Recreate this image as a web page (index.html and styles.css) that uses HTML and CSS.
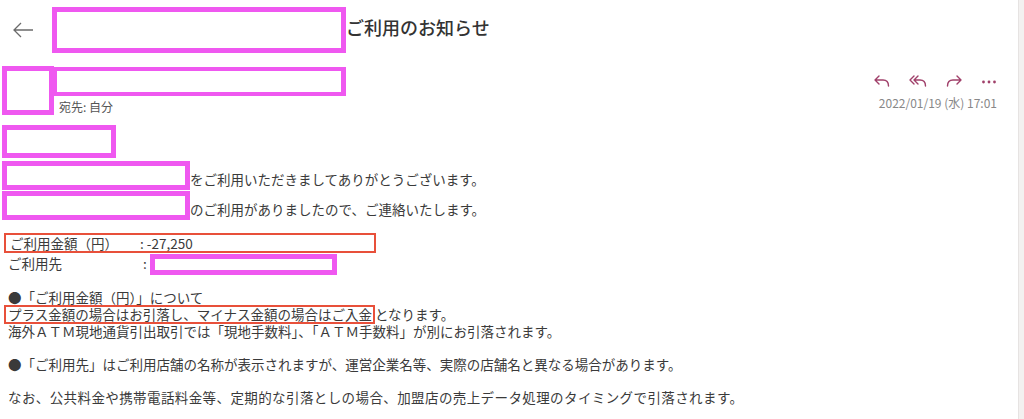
FILE: index.html
```html
<!DOCTYPE html>
<html lang="ja">
<head>
    <meta charset="UTF-8">
    <meta name="viewport" content="width=device-width, initial-scale=1.0">
    <title>ご利用のお知らせ</title>
    <link rel="stylesheet" href="styles.css">
</head>
<body>

<div class="page">
    <div class="mail">

        <!-- 件名 -->
        <div class="topbar">
            <button class="back" aria-label="戻る">
                <svg width="22" height="16" viewBox="0 0 22 16">
                    <path d="M21 8H2 M9 1L2 8L9 15" fill="none" stroke="#6b6b6b" stroke-width="1.3"/>
                </svg>
            </button>
            <div class="redact subject-box"></div>
            <h1 class="title">ご利用のお知らせ</h1>
        </div>

        <!-- 差出人 -->
        <div class="sender">
            <div class="redact avatar"></div>
            <div class="sender-info">
                <div class="redact name-box"></div>
                <div class="to">宛先: 自分</div>
            </div>
            <div class="actions">
                <div class="icons">
                    <svg width="18" height="14" viewBox="0 0 18 14">
                        <path d="M6 2L2 6L6 10 M2 6H10C13.5 6 15.5 8 15.5 12" fill="none" stroke="#a0406a" stroke-width="1.4" stroke-linecap="round" stroke-linejoin="round"/>
                    </svg>
                    <svg width="18" height="14" viewBox="0 0 18 14">
                        <path d="M5 2L1 6L5 10 M9 2L5 6L9 10 M5 6H11C14.5 6 16.5 8 16.5 12" fill="none" stroke="#a0406a" stroke-width="1.4" stroke-linecap="round" stroke-linejoin="round"/>
                    </svg>
                    <svg width="18" height="14" viewBox="0 0 18 14">
                        <path d="M12 2L16 6L12 10 M16 6H8C4.5 6 2.5 8 2.5 12" fill="none" stroke="#a0406a" stroke-width="1.4" stroke-linecap="round" stroke-linejoin="round"/>
                    </svg>
                    <svg width="16" height="14" viewBox="0 0 16 14">
                        <circle cx="2.5" cy="8" r="1.4" fill="#a0406a"/>
                        <circle cx="8" cy="8" r="1.4" fill="#a0406a"/>
                        <circle cx="13.5" cy="8" r="1.4" fill="#a0406a"/>
                    </svg>
                </div>
                <div class="date">2022/01/19 (水) 17:01</div>
            </div>
        </div>

        <!-- 本文 -->
        <div class="body">
            <div class="redact box-short"></div>
            <div class="row">
                <div class="redact box-wide"></div>
                <span class="row-text">をご利用いただきましてありがとうございます。</span>
            </div>
            <div class="row">
                <div class="redact box-wide"></div>
                <span class="row-text">のご利用がありましたので、ご連絡いたします。</span>
            </div>

            <div class="detail mark">
                <span class="label">ご利用金額（円）</span>: -27,250
            </div>
            <div class="detail shop">
                <span class="label label-shop">ご利用先</span>:<span class="redact shop-box"></span>
            </div>

            <p class="line gap">●「ご利用金額（円）」について</p>
            <p class="line"><span class="mark-inline">プラス金額の場合はお引落し、マイナス金額の場合はご入金</span>となります。</p>
            <p class="line">海外ＡＴＭ現地通貨引出取引では「現地手数料」、「ＡＴＭ手数料」が別にお引落されます。</p>
            <p class="line gap">●「ご利用先」はご利用店舗の名称が表示されますが、運営企業名等、実際の店舗名と異なる場合があります。</p>
            <p class="line gap long">なお、公共料金や携帯電話料金等、定期的な引落としの場合、加盟店の売上データ処理のタイミングで引落されます。</p>
        </div>
    </div>

    <div class="side"></div>
</div>

</body>
</html>
```

FILE: styles.css
```css
body {
    margin: 0;
    font-family: "Noto Sans CJK JP", "Noto Sans", sans-serif;
    color: #333;
    background-color: #fff;
    overflow: hidden;
}

.page {
    display: flex;
    height: 419px;
}

.mail {
    flex: 1;
}

/* 塗りつぶし */
.redact {
    box-sizing: border-box;
    border: 5px solid #ef58f0;
    background-color: #fff;
}

/* 件名 */
.topbar {
    display: flex;
    align-items: flex-start;
    padding-top: 7px;
}

.back {
    width: 52px;
    height: 40px;
    padding: 8px 0 0 12px;
    margin: 0;
    border: none;
    background: none;
    text-align: left;
}

.subject-box {
    width: 294px;
    height: 46px;
}

.title {
    margin: 8px 0 0;
    font-size: 18px;
    line-height: 24px;
    font-weight: 500;
    color: #333;
}

/* 差出人 */
.sender {
    display: flex;
    align-items: flex-start;
    margin-top: 13px;
}

.avatar {
    width: 52px;
    height: 49px;
    margin-left: 2px;
}

.name-box {
    width: 294px;
    height: 29px;
    margin: 1px 0 0 -2px;
    border-width: 4px 5px;
}

.to {
    margin: 3px 0 0 5px;
    font-size: 12px;
    line-height: 16px;
    color: #555;
}

.actions {
    margin-left: auto;
    padding-right: 21px;
    text-align: right;
}

.icons {
    display: flex;
    justify-content: flex-end;
    gap: 18px;
    margin-top: 8px;
    height: 14px;
}

.date {
    margin-top: 7px;
    font-size: 12px;
    line-height: 16px;
    color: #888;
}

/* 本文 */
.body {
    padding-left: 2px;
    font-size: 13.5px;
    line-height: 17px;
    color: #3a3a3a;
}

.box-short {
    width: 114px;
    height: 33px;
    margin-top: 10px;
}

.row {
    display: flex;
    align-items: flex-end;
    margin-top: 3px;
}

.row + .row {
    margin-top: 1px;
}

.box-wide {
    width: 188px;
    height: 29px;
}

.row-text {
    padding-bottom: 2px;
}

.detail {
    display: flex;
    align-items: center;
    padding-left: 6px;
}

.mark {
    box-sizing: border-box;
    width: 372px;
    height: 20px;
    margin: 13px 0 0 2px;
    padding-left: 4px;
    border: 2px solid #e8503a;
}

.label {
    display: inline-block;
    width: 130px;
}

.label-shop {
    width: 135px;
}

.shop {
    height: 20px;
}

.shop-box {
    display: inline-block;
    width: 187px;
    height: 21px;
    margin: 3px 0 0 3px;
}

.line {
    height: 17px;
    margin: 0;
    padding-left: 6px;
    white-space: nowrap;
}

.gap {
    margin-top: 16px;
}

.long {
    letter-spacing: 0.4px;
}

.mark-inline {
    display: inline-block;
    box-sizing: border-box;
    height: 19px;
    margin: -1px 0 -1px -4px;
    padding: 0 1px 0 2px;
    line-height: 15px;
    vertical-align: top;
    border: 2px solid #e8503a;
}

/* 右端のバー */
.side {
    width: 5px;
    border-left: 1px solid #e6e3e2;
    background-color: #f3f1f0;
}
```
